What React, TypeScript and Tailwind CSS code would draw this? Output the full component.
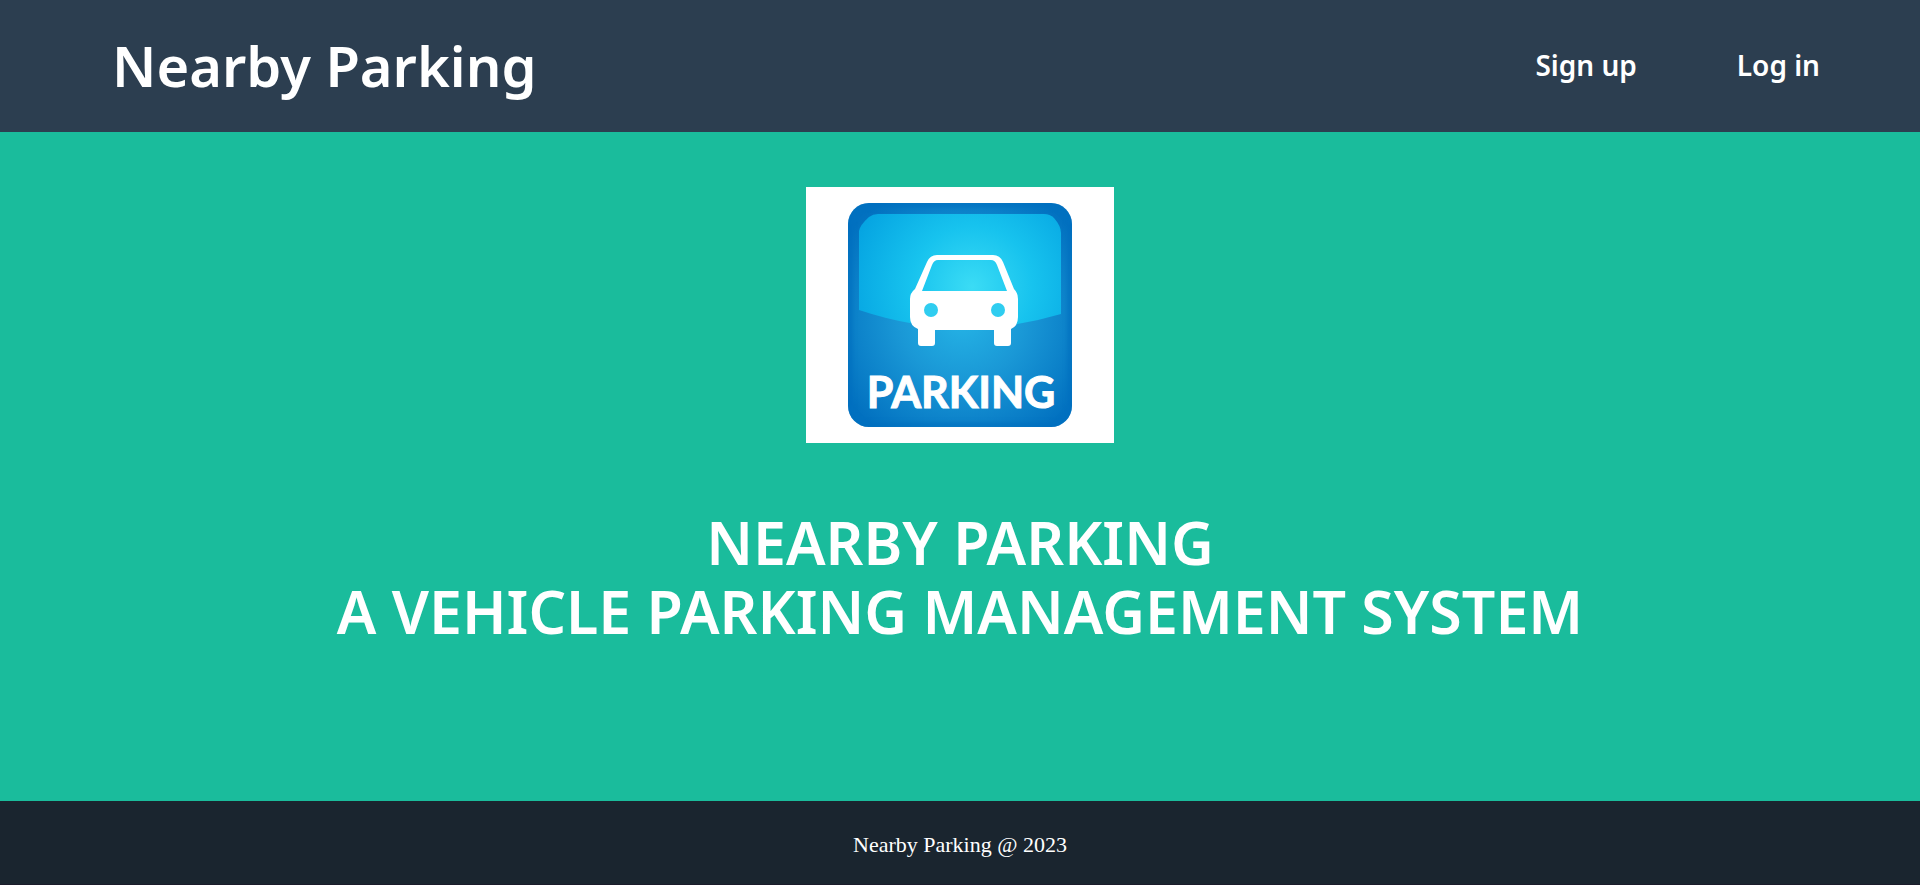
function ParkingLogo() {
  return (
    <svg width="308" height="256" viewBox="0 0 308 256" role="img" aria-label="Parking" className="block">
      <defs>
        <radialGradient id="base" gradientUnits="userSpaceOnUse" cx="156" cy="130" r="140">
          <stop offset="0" stopColor="#25b4e6" />
          <stop offset="0.45" stopColor="#1a98d6" />
          <stop offset="1" stopColor="#0271c0" />
        </radialGradient>
        <radialGradient id="gloss" gradientUnits="userSpaceOnUse" cx="166" cy="100" r="135">
          <stop offset="0" stopColor="#3bdcf5" />
          <stop offset="0.45" stopColor="#17c3ee" />
          <stop offset="1" stopColor="#03a0e0" />
        </radialGradient>
        <filter id="soft" x="-10%" y="-10%" width="120%" height="120%">
          <feGaussianBlur stdDeviation="2" />
        </filter>
        <clipPath id="badge">
          <rect x="42" y="16" width="224" height="224" rx="21" />
        </clipPath>
      </defs>
      <rect width="308" height="256" fill="#fff" />
      <g clipPath="url(#badge)">
        <rect x="42" y="16" width="224" height="224" fill="url(#base)" />
        <rect x="44" y="18" width="220" height="220" rx="19" fill="none" stroke="#0270bf" strokeWidth="5" opacity="0.7" filter="url(#soft)" />
      </g>
      <path d="M53 123V44Q54 38 63 30Q67 27 72 27H238Q244 27 248 31Q255 39 255 46V127Q154 157 53 123Z" fill="url(#gloss)" />
      <path
        fillRule="evenodd"
        fill="#fff"
        d="M131 68H187Q194 68 197 75L208 102Q212 106 212 112V130Q212 139 205 142V156Q205 159 202 159H191Q188 159 188 156V143H129V156Q129 159 126 159H115Q112 159 112 156V142Q104 139 104 130V112Q104 106 109 102L121 75Q124 68 131 68ZM132 73Q128 73 126 78L116 104H201L191 78Q189 73 185 73Z"
      />
      <circle cx="125" cy="123" r="7" fill="#2fcdf0" />
      <circle cx="192" cy="123" r="7" fill="#2fcdf0" />
      <text x="155" y="221" textAnchor="middle" fill="#fff" stroke="#fff" strokeWidth="1" className="font-['Lato',sans-serif] text-[43px] font-bold">
        PARKING
      </text>
    </svg>
  );
}

export default function App() {
  return (
    <div className="flex min-h-screen flex-col bg-[#1abc9c] font-['Noto_Sans',sans-serif] text-white">
      <header className="flex h-33 items-center justify-between bg-[#2c3e50] pr-[100px] pb-0.5 pl-28">
        <a href="#" className="text-[56px] leading-none font-semibold">Nearby Parking</a>
        <nav className="flex gap-[100px] text-[28px] leading-none font-semibold">
          <a href="#signup">Sign up</a>
          <a href="#login">Log in</a>
        </nav>
      </header>
      <main className="flex grow flex-col items-center pt-[55px]">
        <ParkingLogo />
        <h1 className="mt-[65px] text-center text-[59px] leading-[69px] font-semibold">
          <span className="block">NEARBY PARKING</span>
          <span className="block">A VEHICLE PARKING MANAGEMENT SYSTEM</span>
        </h1>
      </main>
      <footer className="flex h-21 items-center justify-center border-b border-[#1b1b2b] bg-[#1a252f] pt-1 font-['Liberation_Serif',serif] text-[22px]">
        <p>Nearby Parking @ 2023</p>
      </footer>
    </div>
  );
}
